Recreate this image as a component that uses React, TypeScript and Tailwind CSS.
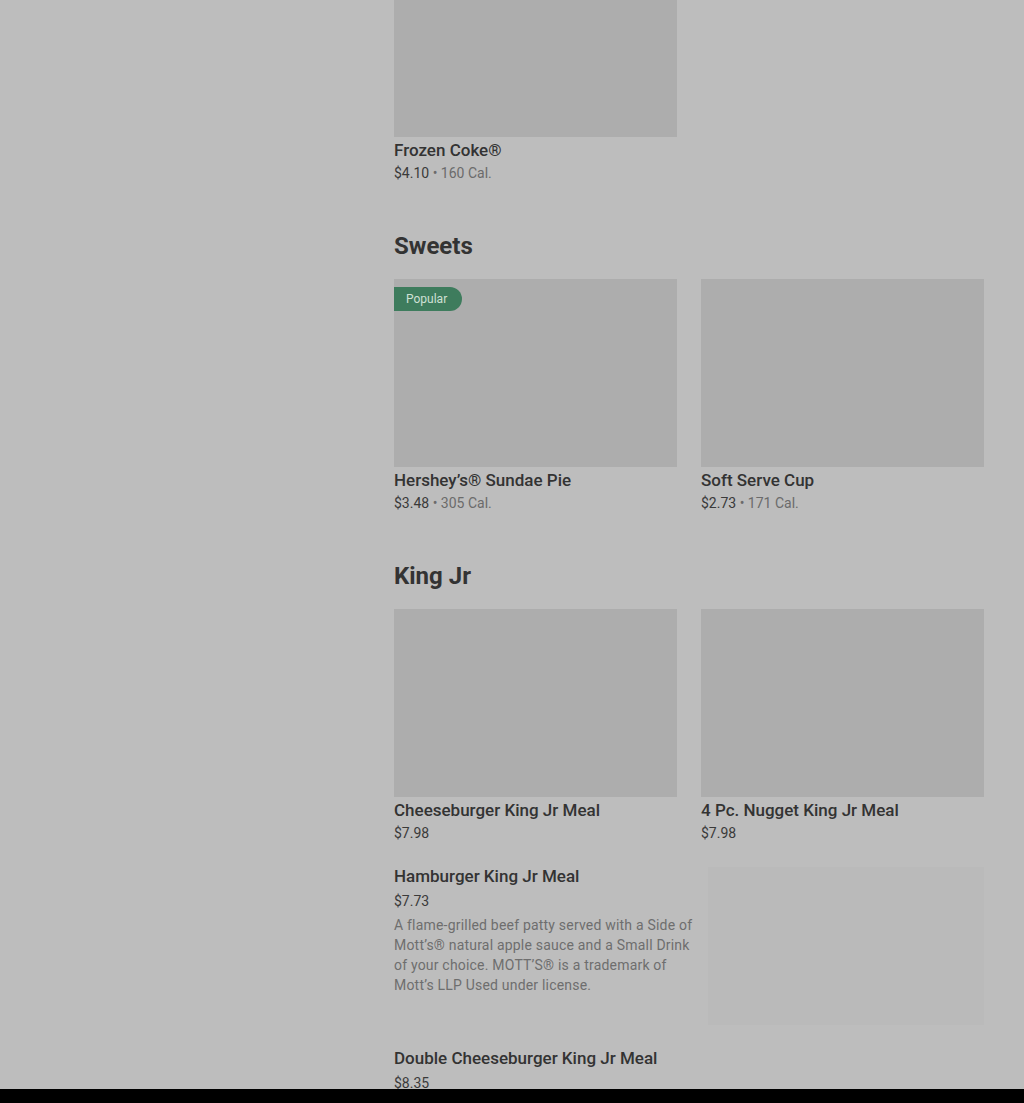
import React from "react";

// ── Types ────────────────────────────────────────────────────────────────────
interface Item {
  name: string;
  price: string;
  cal?: string;
  popular?: boolean;
}

const sweets: Item[] = [
  { name: "Hershey’s® Sundae Pie", price: "$3.48", cal: "305 Cal.", popular: true },
  { name: "Soft Serve Cup", price: "$2.73", cal: "171 Cal." },
];

const kingJr: Item[] = [
  { name: "Cheeseburger King Jr Meal", price: "$7.98" },
  { name: "4 Pc. Nugget King Jr Meal", price: "$7.98" },
];

const font = { fontFamily: "Roboto, 'Liberation Sans', sans-serif" };

// ── Pieces ───────────────────────────────────────────────────────────────────
const ItemText = ({ item }: { item: Item }) => (
  <div className="flex flex-col">
    <div className="mt-px h-6 text-[17px] leading-6 font-medium text-[#333333]">{item.name}</div>
    <div className="mt-px h-5 text-[14px] leading-5 text-[#3a3a3a]">
      {item.price}
      {item.cal && (
        <span className="text-[#6b6b6b]">
          {" • "}
          {item.cal}
        </span>
      )}
    </div>
  </div>
);

const Card = ({ item }: { item: Item }) => (
  <div className="flex flex-col">
    <div className="relative h-[188px] bg-[#adadad]">
      {item.popular && (
        <span className="absolute left-0 top-2 h-6 pl-3 pr-[15px] rounded-r-full bg-[#3e7c5d] text-[12px] leading-6 text-[#cfe0d5]">
          Popular
        </span>
      )}
    </div>
    <ItemText item={item} />
  </div>
);

const Section = ({ title, children }: { title: string; children: React.ReactNode }) => (
  <section className="mt-[47px]">
    <h2 className="h-8 text-[24px] leading-8 font-bold text-[#333333]">{title}</h2>
    <div className="mt-[17px]">{children}</div>
  </section>
);

// ── App ──────────────────────────────────────────────────────────────────────
export default function App() {
  return (
    <div className="min-h-[1103px] bg-[#bdbdbd] flex" style={font}>
      <aside className="w-[394px] shrink-0" />
      <main className="w-[590px] pb-10">
        {/* Frozen Coke (cropped at top) */}
        <div className="w-[283px]">
          <div className="h-[137px] bg-[#adadad]" />
          <ItemText item={{ name: "Frozen Coke®", price: "$4.10", cal: "160 Cal." }} />
        </div>

        <Section title="Sweets">
          <div className="grid grid-cols-2 gap-6">
            {sweets.map((s) => (
              <Card key={s.name} item={s} />
            ))}
          </div>
        </Section>

        <Section title="King Jr">
          <div className="grid grid-cols-2 gap-6">
            {kingJr.map((s) => (
              <Card key={s.name} item={s} />
            ))}
          </div>

          {/* list rows */}
          <div className="mt-[21px] flex justify-between h-[161px]">
            <div className="w-[304px] flex flex-col">
              <div className="h-6 text-[17px] leading-6 font-medium text-[#333333]">Hamburger King Jr Meal</div>
              <div className="mt-[3px] h-5 text-[14px] leading-5 text-[#3a3a3a]">$7.73</div>
              <p className="mt-1 text-[14px] leading-5 tracking-[0.2px] text-[#6e6e6e]">
                A flame-grilled beef patty served with a Side of Mott’s® natural apple sauce and a Small Drink of your choice. MOTT’S® is a trademark of Mott’s LLP Used under license.
              </p>
            </div>
            <div className="mt-[3px] w-[276px] h-[158px] bg-[#bababa]" />
          </div>

          <div className="mt-[21px] flex flex-col">
            <div className="h-6 text-[17px] leading-6 font-medium text-[#333333]">Double Cheeseburger King Jr Meal</div>
            <div className="mt-[3px] h-5 text-[14px] leading-5 text-[#3a3a3a]">$8.35</div>
          </div>
        </Section>
      </main>
      <div className="fixed bottom-0 left-0 right-0 h-[14px] bg-black" />
    </div>
  );
}
